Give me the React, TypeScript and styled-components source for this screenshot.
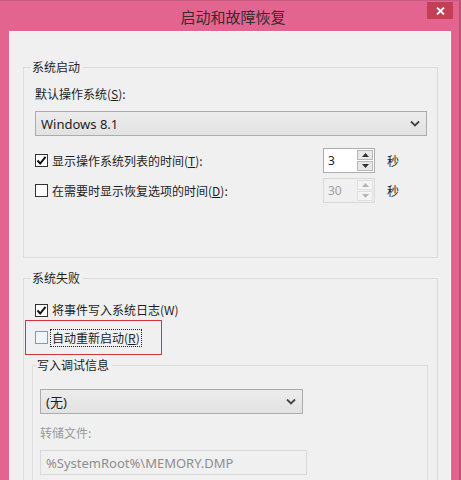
import React from 'react';
import styled, { createGlobalStyle } from 'styled-components';

const GlobalStyle = createGlobalStyle`
    html, body {
        margin: 0;
        padding: 0;
        overflow: hidden;
    }
    body {
        font-family: "Noto Sans", "Noto Sans CJK SC", sans-serif;
        font-size: 12px;
        color: #1e1e1e;
    }
`;

const Window = styled.div`
    width: 461px;
    height: 480px;
    box-sizing: border-box;
    background: #e3648f;
    border-right: 2px solid #b85577;
    border-top: 1px solid #c85a80;
    padding: 0 8px 0 9px;
    display: flex;
    flex-direction: column;
    overflow: hidden;
`;

const TitleBar = styled.div`
    height: 30px;
    display: flex;
    align-items: center;
    justify-content: center;
    position: relative;
    flex-shrink: 0;
`;

const Title = styled.span`
    font-family: "Noto Sans CJK SC", sans-serif;
    font-size: 15px;
    color: #3a2a30;
    margin-left: 6px;
    margin-top: 1px;
`;

const CloseButton = styled.div`
    position: absolute;
    right: -2px;
    top: 1px;
    width: 26px;
    height: 17px;
    background: #c43f55;
    display: flex;
    align-items: center;
    justify-content: center;
    z-index: 1;
`;

const Client = styled.div`
    flex: 1;
    background: #f0f0f0;
    border: 1px solid #fafafa;
    padding: 27px 12px 0 13px;
    display: flex;
    flex-direction: column;
`;

const Group = styled.fieldset<{ $bottom?: number }>`
    margin: 0 0 ${(p) => p.$bottom ?? 0}px 0;
    border: 1px solid #dcdcdc;
    border-radius: 0;
    padding: 0 10px 0 11px;
    min-width: 0;
`;

const Legend = styled.legend`
    font-family: "Noto Sans CJK SC", sans-serif;
    font-size: 12px;
    line-height: 16px;
    padding: 0 3px 0 1px;
    margin-left: -4px;
    color: #1e1e1e;
`;

const SubGroup = styled(Group)`
    margin: 2px -1px 0 -3px;
    padding: 0 0 0 7px;
    height: 140px;
`;

const Label = styled.div<{ $disabled?: boolean; $top: number }>`
    font-family: "Noto Sans CJK SC", sans-serif;
    font-size: 12px;
    line-height: 16px;
    margin-top: ${(p) => p.$top}px;
    color: ${(p) => (p.$disabled ? '#9a9a9a' : '#1e1e1e')};
`;

const Select = styled.div<{ $width?: number; $top: number }>`
    box-sizing: border-box;
    height: 25px;
    width: ${(p) => (p.$width ? `${p.$width}px` : 'auto')};
    margin-top: ${(p) => p.$top}px;
    border: 1px solid #acacac;
    background: linear-gradient(#ececec, #e2e2e2);
    display: flex;
    align-items: center;
    justify-content: space-between;
    padding: 0 6px 0 5px;
    font-size: 13px;
    color: #1e1e1e;
`;

const Row = styled.div<{ $top: number; $height?: number }>`
    display: flex;
    align-items: center;
    height: ${(p) => p.$height ?? 25}px;
    margin-top: ${(p) => p.$top}px;
`;

const CheckLabel = styled.label`
    display: flex;
    align-items: center;
    font-family: "Noto Sans CJK SC", sans-serif;
    font-size: 12px;
    line-height: 16px;
    color: #1e1e1e;
    flex: 1;
`;

const Box = styled.span<{ $hover?: boolean }>`
    box-sizing: border-box;
    width: 13px;
    height: 13px;
    border: 1px solid ${(p) => (p.$hover ? '#7f9db9' : '#333')};
    background: ${(p) => (p.$hover ? '#eef6fb' : '#fff')};
    display: flex;
    align-items: center;
    justify-content: center;
    margin-right: 3px;
    flex-shrink: 0;
`;

const Text = styled.span<{ $focus?: boolean }>`
    outline: ${(p) => (p.$focus ? '1px dotted #222' : 'none')};
    outline-offset: 0;
    padding: 0 1px;
`;

const Spinner = styled.div<{ $disabled?: boolean }>`
    box-sizing: border-box;
    width: 52px;
    height: 25px;
    border: 1px solid ${(p) => (p.$disabled ? '#d9d9d9' : '#abadb3')};
    background: ${(p) => (p.$disabled ? '#f0f0f0' : '#fff')};
    display: flex;
`;

const SpinValue = styled.div<{ $disabled?: boolean }>`
    flex: 1;
    padding: 3px 0 0 4px;
    font-size: 12px;
    color: ${(p) => (p.$disabled ? '#a0a0a0' : '#1e1e1e')};
`;

const SpinButtons = styled.div`
    width: 16px;
    display: flex;
    flex-direction: column;
    padding: 1px 1px 1px 0;
    gap: 1px;
`;

const SpinButton = styled.div<{ $disabled?: boolean }>`
    flex: 1;
    border: 1px solid ${(p) => (p.$disabled ? '#e0e0e0' : '#b8b8b8')};
    background: ${(p) => (p.$disabled ? '#f4f4f4' : '#e8e8e8')};
    display: flex;
    align-items: center;
    justify-content: center;
`;

const Unit = styled.span`
    font-family: "Noto Sans CJK SC", sans-serif;
    font-size: 12px;
    width: 52px;
    padding-left: 12px;
    box-sizing: border-box;
`;

const Highlight = styled.div`
    box-sizing: border-box;
    width: 137px;
    height: 35px;
    margin: 2px 0 0 -10px;
    padding-left: 9px;
    border: 1px solid #d0343c;
    display: flex;
    align-items: center;
`;

const TextField = styled.div`
    box-sizing: border-box;
    width: 267px;
    height: 25px;
    margin-top: 9px;
    border: 1px solid #d9d9d9;
    background: #f0f0f0;
    padding: 3px 0 0 5px;
    font-size: 13px;
    color: #8e8e8e;
`;

const Spacer = styled.div`
    height: 54px;
`;

const Chevron = () => (
    <svg width="10" height="7" viewBox="0 0 10 7">
        <path d="M1 1.5 L5 5.5 L9 1.5" fill="none" stroke="#444" strokeWidth="1.8" />
    </svg>
);

const Tick = () => (
    <svg width="11" height="11" viewBox="0 0 11 11">
        <path d="M1.5 5.5 L4.2 8.5 L9.5 1.8" fill="none" stroke="#111" strokeWidth="2" />
    </svg>
);

const Arrow = ({ up, disabled }: { up?: boolean; disabled?: boolean }) => (
    <svg width="7" height="4" viewBox="0 0 7 4">
        <path
            d={up ? 'M0 4 L3.5 0 L7 4 Z' : 'M0 0 L3.5 4 L7 0 Z'}
            fill={disabled ? '#b5b5b5' : '#333'}
        />
    </svg>
);

const SpinRow = ({
    top,
    label,
    value,
    checked,
    disabled,
}: {
    top: number;
    label: React.ReactNode;
    value: string;
    checked?: boolean;
    disabled?: boolean;
}) => (
    <Row $top={top}>
        <CheckLabel>
            <Box>{checked && <Tick />}</Box>
            <Text>{label}</Text>
        </CheckLabel>
        <Spinner $disabled={disabled}>
            <SpinValue $disabled={disabled}>{value}</SpinValue>
            <SpinButtons>
                <SpinButton $disabled={disabled}>
                    <Arrow up disabled={disabled} />
                </SpinButton>
                <SpinButton $disabled={disabled}>
                    <Arrow disabled={disabled} />
                </SpinButton>
            </SpinButtons>
        </Spinner>
        <Unit>秒</Unit>
    </Row>
);

const App = () => (
    <>
        <GlobalStyle />
        <Window>
            <TitleBar>
                <Title>启动和故障恢复</Title>
                <CloseButton>
                    <svg width="9" height="8" viewBox="0 0 9 8">
                        <path d="M1 0.5 L8 7.5 M8 0.5 L1 7.5" stroke="#fff" strokeWidth="1.8" />
                    </svg>
                </CloseButton>
            </TitleBar>
            <Client>
                <Group $bottom={12}>
                    <Legend>系统启动</Legend>
                    <Label $top={11}>
                        默认操作系统(<u>S</u>):
                    </Label>
                    <Select $top={9}>
                        <span>Windows 8.1</span>
                        <Chevron />
                    </Select>
                    <SpinRow
                        top={12}
                        checked
                        value="3"
                        label={
                            <>
                                显示操作系统列表的时间(<u>T</u>):
                            </>
                        }
                    />
                    <SpinRow
                        top={5}
                        disabled
                        value="30"
                        label={
                            <>
                                在需要时显示恢复选项的时间(<u>D</u>):
                            </>
                        }
                    />
                    <Spacer />
                </Group>
                <Group>
                    <Legend>系统失败</Legend>
                    <Row $top={16} $height={16}>
                        <CheckLabel>
                            <Box>
                                <Tick />
                            </Box>
                            <Text>将事件写入系统日志(W)</Text>
                        </CheckLabel>
                    </Row>
                    <Highlight>
                        <CheckLabel>
                            <Box $hover />
                            <Text $focus>
                                自动重新启动(<u>R</u>)
                            </Text>
                        </CheckLabel>
                    </Highlight>
                    <SubGroup>
                        <Legend>写入调试信息</Legend>
                        <Select $top={16} $width={263}>
                            <span>(无)</span>
                            <Chevron />
                        </Select>
                        <Label $top={11} $disabled>
                            转储文件:
                        </Label>
                        <TextField>%SystemRoot%\MEMORY.DMP</TextField>
                    </SubGroup>
                </Group>
            </Client>
        </Window>
    </>
);

export default App;
